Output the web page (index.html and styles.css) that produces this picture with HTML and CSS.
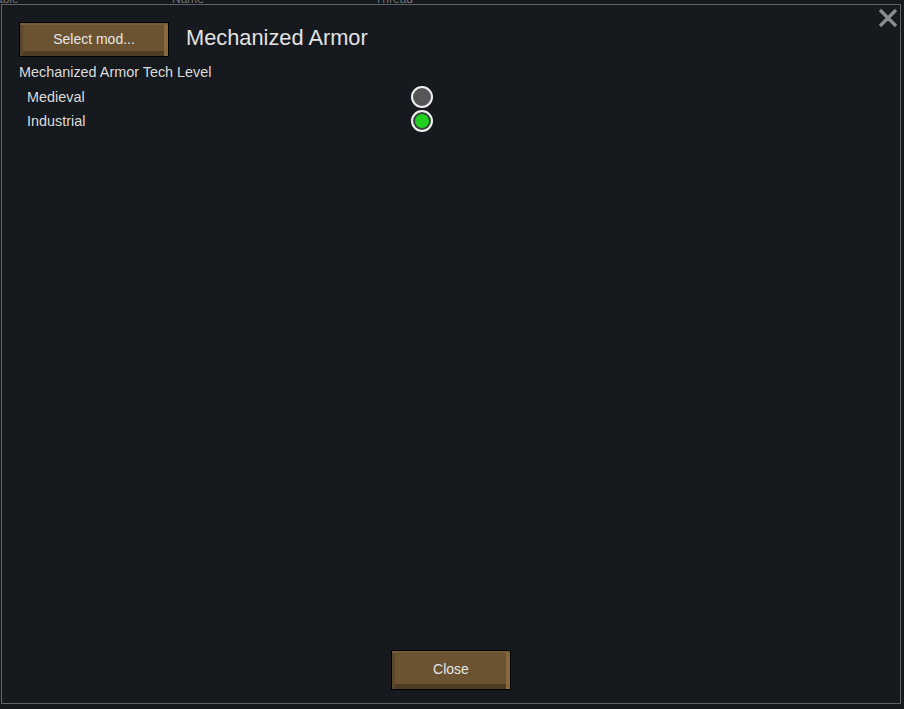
FILE: index.html
```html
<!DOCTYPE html>
<html>

<head>
    <title>Mod Settings</title>
    <meta charset="UTF-8">
    <link rel="stylesheet" href="styles.css">
</head>

<body>
    <div class="backdrop">
        <span class="bg-label col-a">able</span>
        <span class="bg-label col-b">Name</span>
        <span class="bg-label col-c">Thread</span>
    </div>

    <div class="dialog">
        <button class="close-x" title="Close">
            <svg width="20" height="20" viewBox="0 0 20 20">
                <path d="M2 2 L18 18 M18 2 L2 18" stroke="#8a8d91" stroke-width="3.2" stroke-linecap="butt" />
            </svg>
        </button>

        <div class="dialog-head">
            <button class="wood-button select-mod">Select mod...</button>
            <h1>Mechanized Armor</h1>
        </div>

        <div class="setting-group">
            <div class="group-label">Mechanized Armor Tech Level</div>
            <div class="option">
                <span>Medieval</span>
                <span class="radio"></span>
            </div>
            <div class="option">
                <span>Industrial</span>
                <span class="radio checked"></span>
            </div>
        </div>

        <div class="dialog-foot">
            <button class="wood-button close-button">Close</button>
        </div>
    </div>
</body>

</html>
```

FILE: styles.css
```css
body {
    font-family: 'Liberation Sans', Arial, sans-serif;
    width: 904px;
    height: 709px;
    margin: 0;
    padding: 0;
    background-color: #15181c;
    color: #dcdcdc;
    overflow: hidden;
    position: relative;
}

.backdrop {
    position: absolute;
    top: -8px;
    left: 0;
    width: 904px;
    font-size: 12px;
    color: #6f7378;
}

.bg-label {
    position: absolute;
}

.col-a {
    left: -4px;
}

.col-b {
    left: 172px;
}

.col-c {
    left: 375px;
}

.dialog {
    position: absolute;
    top: 4px;
    left: 1px;
    width: 898px;
    height: 698px;
    border: 1px solid #5f646b;
    background-color: #16191d;
    display: flex;
    flex-direction: column;
    padding: 0;
}

.close-x {
    position: absolute;
    top: 3px;
    right: 2px;
    width: 20px;
    height: 20px;
    padding: 0;
    border: none;
    background: none;
    cursor: pointer;
}

.close-x svg {
    display: block;
}

.dialog-head {
    display: flex;
    align-items: center;
    padding: 17px 0 0 17px;
}

.dialog-head h1 {
    margin: 0 0 3px 17px;
    font-size: 21.8px;
    font-weight: normal;
    color: #e2e2e2;
}

.wood-button {
    font-family: 'Liberation Sans', Arial, sans-serif;
    font-size: 14px;
    color: #e6e6e6;
    background-color: #6b5331;
    border: 1px solid #000;
    box-shadow:
        inset 0 2px 0 #765c36,
        inset -4px 0 0 #88693d,
        inset 3px 0 0 #5c472a,
        inset 0 -5px 0 #4e3c22;
    cursor: pointer;
    padding: 0 0 2px;
}

.select-mod {
    width: 150px;
    height: 35px;
}

.setting-group {
    padding: 7px 0 0 17px;
    font-size: 14.4px;
}

.group-label {
    line-height: 17px;
    margin-bottom: 4px;
}

.option {
    display: flex;
    justify-content: space-between;
    align-items: center;
    width: 406px;
    height: 24px;
    padding-left: 8px;
}

.option span:first-child {
    margin-top: -1px;
}

.radio {
    width: 18px;
    height: 18px;
    border-radius: 50%;
    border: 2px solid #f0f0f0;
    background-color: #555658;
    box-sizing: content-box;
}

.radio.checked {
    background-color: #22d022;
    box-shadow: inset 0 0 0 2px #3a3d40;
}

.dialog-foot {
    margin-top: auto;
    display: flex;
    justify-content: center;
    padding-bottom: 13px;
}

.close-button {
    width: 120px;
    height: 40px;
}
```
